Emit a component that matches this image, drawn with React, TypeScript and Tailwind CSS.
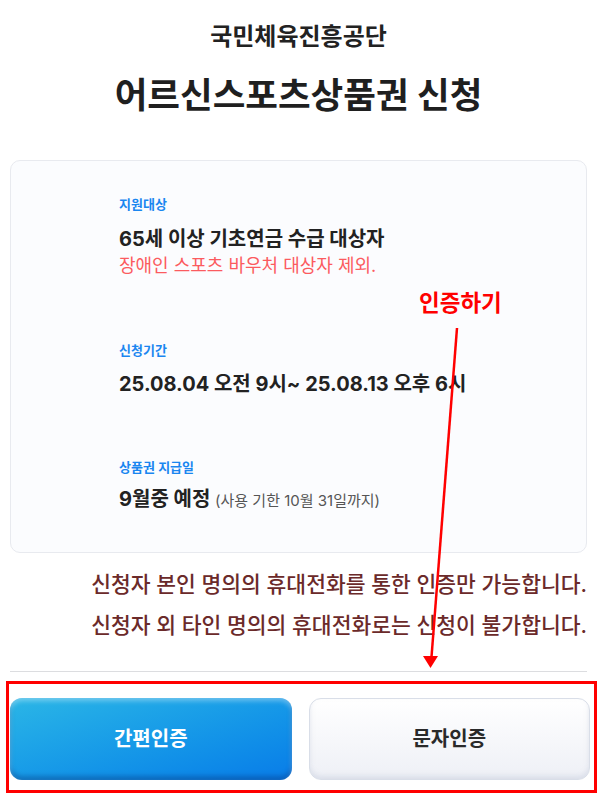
export default function App() {
  const font = { fontFamily: 'Inter, "Noto Sans CJK KR", "Noto Sans", sans-serif' }

  return (
    <div className="relative w-[597px] h-[804px] bg-white overflow-hidden text-[#222]" style={font}>
      <div className="px-[10px] pt-[22px]">
        <h2 className="text-center text-[24px] leading-[30px] font-semibold text-[#222]">
          국민체육진흥공단
        </h2>
        <h1 className="mt-[22px] text-center text-[35.5px] leading-[44px] font-bold text-[#1f1f1f]">
          어르신스포츠상품권 신청
        </h1>

        <div className="mt-[42px] rounded-[10px] border border-[#e8eaef] bg-[#fbfcfe] pl-[108px] pt-[34px] pb-[38px]">
          <p className="text-[13px] leading-[18px] font-semibold text-[#1a86f0]">지원대상</p>
          <p className="mt-[13px] text-[20px] leading-[26px] font-bold text-[#222]">
            65세 이상 기초연금 수급 대상자
          </p>
          <p className="mt-[2px] text-[18px] leading-[24px] text-[#fb5b5f]">
            장애인 스포츠 바우처 대상자 제외.
          </p>

          <p className="mt-[63px] text-[13px] leading-[18px] font-semibold text-[#1a86f0]">신청기간</p>
          <p className="mt-[12px] text-[20px] leading-[26px] font-bold text-[#222]">
            25.08.04 오전 9시~ 25.08.13 오후 6시
          </p>

          <p className="mt-[61px] text-[13px] leading-[18px] font-semibold text-[#1a86f0]">상품권 지급일</p>
          <p className="mt-[10px] text-[20px] leading-[26px] font-bold text-[#222]">
            9월중 예정{' '}
            <span className="text-[15px] font-normal text-[#555]">(사용 기한 10월 31일까지)</span>
          </p>
        </div>

        <p className="mt-[17px] text-right text-[21.5px] leading-[28px] font-medium text-[#6b2a2a]">
          신청자 본인 명의의 휴대전화를 통한 인증만 가능합니다.
        </p>
        <p className="mt-[13px] text-right text-[21.5px] leading-[28px] font-medium text-[#6b2a2a]">
          신청자 외 타인 명의의 휴대전화로는 신청이 불가합니다.
        </p>

        <hr className="mt-[32px] border-0 h-px bg-[#dcdde0]" />

        <div className="mt-[26px] grid w-[580px] grid-cols-2 gap-[17px]">
          <button className="h-[82px] rounded-[12px] bg-gradient-to-br from-[#2bb6e6] to-[#0a7ce8] text-[20px] font-bold text-white shadow-[inset_0_3px_5px_rgba(255,255,255,0.35),inset_0_-4px_5px_rgba(0,40,110,0.35)]">
            간편인증
          </button>
          <button className="h-[82px] rounded-[12px] border border-[#d9dee8] bg-gradient-to-b from-white to-[#eef0f6] text-[20px] font-bold text-[#2a2a2a] shadow-[inset_0_-3px_5px_rgba(180,188,210,0.35)]">
            문자인증
          </button>
        </div>
      </div>

      {/* annotation overlay */}
      <p className="absolute left-[419px] top-[289px] text-[22.5px] leading-[28px] font-bold text-[#ff0000]">
        인증하기
      </p>
      <svg className="absolute left-0 top-0 pointer-events-none" width="597" height="804" viewBox="0 0 597 804">
        <line x1="457" y1="328" x2="431.5" y2="657" stroke="#ff0000" strokeWidth="2.5" />
        <polygon points="423,656 438,656 430.5,668" fill="#ff0000" />
      </svg>
      <div className="absolute left-[6px] top-[681px] w-[591px] h-[112px] border-[3px] border-[#ff0000]" />
    </div>
  )
}
